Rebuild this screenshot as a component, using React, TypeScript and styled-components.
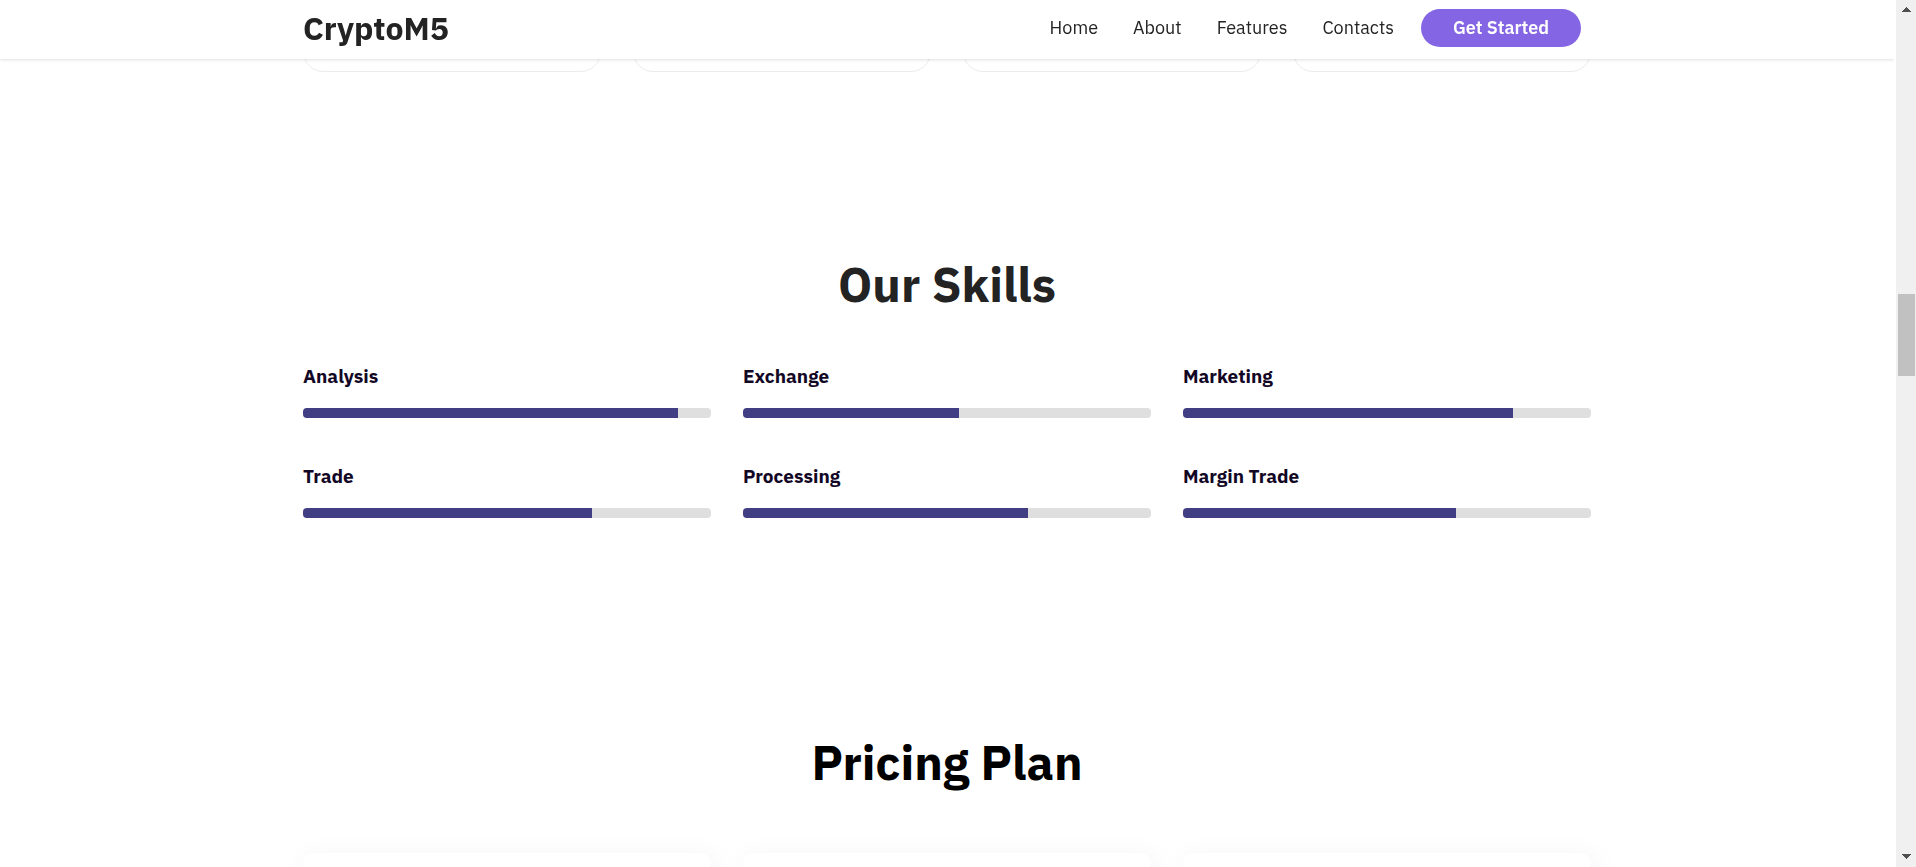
import React from 'react';
import styled, { createGlobalStyle } from 'styled-components';

const GlobalStyle = createGlobalStyle`
  *, *::before, *::after { box-sizing: border-box; }
  body {
    margin: 0;
    background: #fff;
    font-family: 'IBM Plex Sans', Roboto, 'Liberation Sans', sans-serif;
    color: #232323;
  }
`;

const Frame = styled.div`
  display: flex;
  height: 100vh;
  overflow: hidden;
`;

const Page = styled.div`
  flex: 1;
  min-width: 0;
  overflow: hidden;
`;

const Container = styled.div`
  max-width: 1320px;
  margin: 0 auto;
  padding: 0 16px;
`;

const Header = styled.header`
  position: sticky;
  top: 0;
  z-index: 2;
  height: 59px;
  background: #fff;
  box-shadow: 0 1px 3px rgba(0, 0, 0, 0.12);
`;

const HeaderRow = styled(Container)`
  display: flex;
  align-items: center;
  justify-content: space-between;
  height: 56px;
`;

const Logo = styled.a`
  font-size: 32px;
  line-height: 40px;
  font-weight: 700;
  color: #232323;
  text-decoration: none;
`;

const Nav = styled.nav`
  display: flex;
  align-items: center;
  gap: 27px;
  padding-right: 10px;
`;

const NavList = styled.ul`
  display: flex;
  gap: 35px;
  margin: 0;
  padding: 0;
  list-style: none;
`;

const NavLink = styled.a`
  font-size: 18px;
  line-height: 24px;
  color: #232323;
  text-decoration: none;
`;

const StartButton = styled.button`
  width: 160px;
  height: 38px;
  padding: 0 0 1px;
  border: 0;
  border-radius: 20px;
  background: #8465e3;
  color: #fff;
  font-family: inherit;
  font-size: 18px;
  font-weight: 600;
  cursor: pointer;
`;

const FeatureGrid = styled.div`
  display: grid;
  grid-template-columns: repeat(4, 1fr);
  gap: 32px;
  margin-top: -59px;
`;

const FeatureCard = styled.article`
  height: 72px;
  border: 1px solid #ececec;
  border-radius: 20px;
`;

const Skills = styled.section`
  padding-top: 182px;
`;

const Title = styled.h2<{ $color: string }>`
  margin: 0;
  font-size: 48px;
  line-height: 60px;
  font-weight: 700;
  text-align: center;
  color: ${(p) => p.$color};
`;

const SkillGrid = styled.div`
  display: grid;
  grid-template-columns: repeat(3, 1fr);
  gap: 44px 32px;
  margin-top: 48px;
`;

const SkillName = styled.h3`
  margin: 0 0 18px;
  font-size: 19px;
  line-height: 28px;
  font-weight: 700;
  color: #130726;
`;

const Track = styled.div`
  height: 10px;
  border-radius: 4px;
  overflow: hidden;
  background: #dfdfdf;
`;

const Fill = styled.div`
  height: 100%;
  background: #423e83;
`;

const Pricing = styled.section`
  padding-top: 214px;
`;

const PlanGrid = styled.div`
  display: grid;
  grid-template-columns: repeat(3, 1fr);
  gap: 32px;
  margin-top: 61px;
`;

const PlanCard = styled.article`
  height: 480px;
  border-radius: 10px;
  background: #fff;
  box-shadow: 4px 4px 30px rgba(0, 0, 0, 0.05);
`;

const ScrollRail = styled.div`
  display: flex;
  flex-direction: column;
  justify-content: space-between;
  align-items: center;
  width: 22px;
  padding: 7px 1px 8px 2px;
  border-left: 2px solid #fff;
  background: #f0f0f0;
`;

const ScrollThumb = styled.div`
  width: 17px;
  height: 82px;
  margin-bottom: 196px;
  background: #c1c1c1;
`;

const Arrow = styled.svg`
  display: block;
  width: 9px;
  height: 5px;
  fill: #505050;
`;

const links = ['Home', 'About', 'Features', 'Contacts'];
const featureCards = ['one', 'two', 'three', 'four'];
const plans = ['basic', 'standard', 'premium'];
const skills = [
  { name: 'Analysis', value: 92 },
  { name: 'Exchange', value: 53 },
  { name: 'Marketing', value: 81 },
  { name: 'Trade', value: 70.8 },
  { name: 'Processing', value: 69.8 },
  { name: 'Margin Trade', value: 67 },
];

export default function App() {
  return (
    <Frame>
      <GlobalStyle />
      <Page>
        <Header>
          <HeaderRow>
            <Logo href="#home">CryptoM5</Logo>
            <Nav>
              <NavList>
                {links.map((link) => (
                  <li key={link}>
                    <NavLink href={`#${link.toLowerCase()}`}>{link}</NavLink>
                  </li>
                ))}
              </NavList>
              <StartButton type="button">Get Started</StartButton>
            </Nav>
          </HeaderRow>
        </Header>
        <Container as="main">
          <FeatureGrid>
            {featureCards.map((card) => (
              <FeatureCard key={card} />
            ))}
          </FeatureGrid>
          <Skills>
            <Title $color="#232323">Our Skills</Title>
            <SkillGrid>
              {skills.map(({ name, value }) => (
                <div key={name}>
                  <SkillName>{name}</SkillName>
                  <Track role="progressbar" aria-label={name} aria-valuenow={value}>
                    <Fill style={{ width: `${value}%` }} />
                  </Track>
                </div>
              ))}
            </SkillGrid>
          </Skills>
          <Pricing>
            <Title $color="#000">Pricing Plan</Title>
            <PlanGrid>
              {plans.map((plan) => (
                <PlanCard key={plan} />
              ))}
            </PlanGrid>
          </Pricing>
        </Container>
      </Page>
      <ScrollRail aria-hidden="true">
        <Arrow viewBox="0 0 9 5">
          <path d="M4 0h1v1h1v1h1v1h1v1h1v1H0V4h1V3h1V2h1V1h1z" />
        </Arrow>
        <ScrollThumb />
        <Arrow viewBox="0 0 9 5">
          <path d="M4 5h1V4h1V3h1V2h1V1h1V0H0v1h1v1h1v1h1v1h1z" />
        </Arrow>
      </ScrollRail>
    </Frame>
  );
}
